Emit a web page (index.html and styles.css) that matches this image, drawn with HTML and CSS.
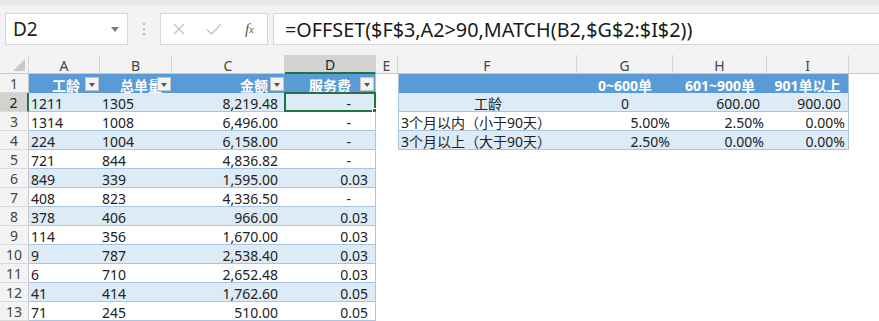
FILE: index.html
```
<!DOCTYPE html>
<html lang="zh">
<head>
<meta charset="utf-8">
<title>OFFSET</title>
<link rel="stylesheet" href="styles.css">
</head>
<body>
<div class="app">
  <div class="fbar">
    <div class="namebox">
      <span>D2</span>
      <svg class="caret" width="8" height="5" viewBox="0 0 8 5"><path d="M0 0H8L4 5Z" fill="#7a7a7a"/></svg>
    </div>
    <div class="grip">
      <svg width="4" height="14" viewBox="0 0 4 14"><circle cx="2" cy="2" r="1.2" fill="#bdbdbd"/><circle cx="2" cy="7" r="1.2" fill="#bdbdbd"/><circle cx="2" cy="12" r="1.2" fill="#bdbdbd"/></svg>
    </div>
    <div class="fbtns">
      <span class="fbtn"><svg width="12" height="12" viewBox="0 0 12 12"><path d="M1 1L11 11M11 1L1 11" stroke="#c4c4c4" stroke-width="1.4"/></svg></span>
      <span class="fbtn"><svg width="16" height="12" viewBox="0 0 16 12"><path d="M1 6.5L5.5 11L15 1" stroke="#c4c4c4" stroke-width="1.4" fill="none"/></svg></span>
      <span class="fbtn fx"><i>f</i><sub>x</sub></span>
    </div>
    <div class="finput">=OFFSET($F$3,A2&gt;90,MATCH(B2,$G$2:$I$2))</div>
  </div>

  <div class="sheet">
    <!-- column headers -->
    <div class="corner"><svg width="12" height="12" viewBox="0 0 12 12"><path d="M12 0V12H0Z" fill="#c9c9c9"/></svg></div>
    <div class="ch">A</div>
    <div class="ch">B</div>
    <div class="ch">C</div>
    <div class="ch sel">D</div>
    <div class="ch">E</div>
    <div class="ch">F</div>
    <div class="ch">G</div>
    <div class="ch">H</div>
    <div class="ch">I</div>
    <div class="ch last"></div>

    <!-- row 1 -->
    <div class="rh">1</div>
    <div class="c th pa">工龄<span class="flt"></span></div>
    <div class="c th pb">总单量<span class="flt"></span></div>
    <div class="c th pc">金额<span class="flt"></span></div>
    <div class="c th pd dr">服务费<span class="flt"></span></div>
    <div class="c e"></div>
    <div class="c th2 fl"></div>
    <div class="c th2 ctr">0~600单</div>
    <div class="c th2 ctr">601~900单</div>
    <div class="c th2 ctr ir">901单以上</div>
    <div class="c e"></div>

    <!-- row 2 -->
    <div class="rh sel">2</div>
    <div class="c b1 l">1211</div>
    <div class="c b1 l">1305</div>
    <div class="c b1 r">8,219.48</div>
    <div class="c b1 r dash dr active">-<span class="selbox"><span class="handle"></span></span></div>
    <div class="c e"></div>
    <div class="c b1 ctr fl">工龄</div>
    <div class="c b1 ctr">0</div>
    <div class="c b1 r">600.00</div>
    <div class="c b1 r ir">900.00</div>
    <div class="c e"></div>

    <!-- row 3 -->
    <div class="rh">3</div>
    <div class="c b0 l">1314</div>
    <div class="c b0 l">1008</div>
    <div class="c b0 r">6,496.00</div>
    <div class="c b0 r dash dr">-</div>
    <div class="c e"></div>
    <div class="c b0 l fl">3个月以内（小于90天）</div>
    <div class="c b0 r pct">5.00%</div>
    <div class="c b0 r pct">2.50%</div>
    <div class="c b0 r pct ir">0.00%</div>
    <div class="c e"></div>

    <!-- row 4 -->
    <div class="rh">4</div>
    <div class="c b1 l">224</div>
    <div class="c b1 l">1004</div>
    <div class="c b1 r">6,158.00</div>
    <div class="c b1 r dash dr">-</div>
    <div class="c e"></div>
    <div class="c b1 l fl">3个月以上（大于90天）</div>
    <div class="c b1 r pct">2.50%</div>
    <div class="c b1 r pct">0.00%</div>
    <div class="c b1 r pct ir">0.00%</div>
    <div class="c e"></div>

    <!-- row 5 -->
    <div class="rh">5</div>
    <div class="c b0 l">721</div>
    <div class="c b0 l">844</div>
    <div class="c b0 r">4,836.82</div>
    <div class="c b0 r dash dr">-</div>
    <div class="blank"></div>

    <!-- row 6 -->
    <div class="rh">6</div>
    <div class="c b1 l">849</div>
    <div class="c b1 l">339</div>
    <div class="c b1 r">1,595.00</div>
    <div class="c b1 r dr">0.03</div>
    <div class="blank"></div>

    <!-- row 7 -->
    <div class="rh">7</div>
    <div class="c b0 l">408</div>
    <div class="c b0 l">823</div>
    <div class="c b0 r">4,336.50</div>
    <div class="c b0 r dash dr">-</div>
    <div class="blank"></div>

    <!-- row 8 -->
    <div class="rh">8</div>
    <div class="c b1 l">378</div>
    <div class="c b1 l">406</div>
    <div class="c b1 r">966.00</div>
    <div class="c b1 r dr">0.03</div>
    <div class="blank"></div>

    <!-- row 9 -->
    <div class="rh">9</div>
    <div class="c b0 l">114</div>
    <div class="c b0 l">356</div>
    <div class="c b0 r">1,670.00</div>
    <div class="c b0 r dr">0.03</div>
    <div class="blank"></div>

    <!-- row 10 -->
    <div class="rh">10</div>
    <div class="c b1 l">9</div>
    <div class="c b1 l">787</div>
    <div class="c b1 r">2,538.40</div>
    <div class="c b1 r dr">0.03</div>
    <div class="blank"></div>

    <!-- row 11 -->
    <div class="rh">11</div>
    <div class="c b0 l">6</div>
    <div class="c b0 l">710</div>
    <div class="c b0 r">2,652.48</div>
    <div class="c b0 r dr">0.03</div>
    <div class="blank"></div>

    <!-- row 12 -->
    <div class="rh">12</div>
    <div class="c b1 l">41</div>
    <div class="c b1 l">414</div>
    <div class="c b1 r">1,762.60</div>
    <div class="c b1 r dr">0.05</div>
    <div class="blank"></div>

    <!-- row 13 -->
    <div class="rh">13</div>
    <div class="c b0 l">71</div>
    <div class="c b0 l">245</div>
    <div class="c b0 r">510.00</div>
    <div class="c b0 r dr">0.05</div>
    <div class="blank"></div>
  </div>
</div>
</body>
</html>
```
FILE: styles.css
```
* {
  box-sizing: border-box;
  margin: 0;
  padding: 0;
}

body {
  margin: 0;
  width: 879px;
  height: 321px;
  overflow: hidden;
  background: #ffffff;
  font-family: "Noto Sans", "Noto Sans CJK SC", sans-serif;
  font-size: 14px;
  color: #222;
}

/* ---------- formula bar ---------- */
.fbar {
  height: 55px;
  background: #f3f3f3;
  border-top: 5px solid #e8e8e8;
  padding-top: 8px;
  display: flex;
  align-items: flex-start;
}

.namebox {
  width: 123px;
  height: 32px;
  margin-left: 5px;
  background: #ffffff;
  border: 1px solid #d6d6d6;
  display: flex;
  align-items: center;
  justify-content: space-between;
  padding: 0 8px 0 7px;
  font-size: 19px;
  color: #222;
}

.grip {
  width: 32px;
  height: 32px;
  display: flex;
  align-items: center;
  justify-content: center;
}

.fbtns {
  width: 108px;
  height: 32px;
  background: #ffffff;
  border: 1px solid #d6d6d6;
  display: flex;
  align-items: center;
}

.fbtn {
  width: 36px;
  display: flex;
  justify-content: center;
  align-items: center;
}

.fx {
  font-family: "Liberation Serif", serif;
  font-size: 15px;
  color: #555;
  font-style: italic;
}

.fx i {
  font-style: italic;
}

.fx sub {
  font-size: 10px;
  vertical-align: -1px;
}

.finput {
  flex: 1;
  height: 32px;
  margin-left: 5px;
  margin-right: -3px;
  background: #ffffff;
  border: 1px solid #d6d6d6;
  display: flex;
  align-items: center;
  padding-left: 11px;
  font-size: 19.8px;
  color: #1a1a1a;
  white-space: nowrap;
}

/* ---------- sheet grid ---------- */
.sheet {
  display: grid;
  grid-template-columns: 29px 71px 72px 113px 91px 22px 179px 96px 94px 82px 30px;
  grid-auto-rows: 19px;
}

.corner {
  background: #f3f3f3;
  border-right: 1px solid #d4d4d4;
  border-bottom: 1px solid #c8c8c8;
  display: flex;
  align-items: flex-end;
  justify-content: flex-end;
  padding: 0 3px 2px 0;
}

.ch {
  background: #f3f3f3;
  border-right: 1px solid #d4d4d4;
  border-bottom: 1px solid #c8c8c8;
  color: #444;
  font-size: 14px;
  display: flex;
  align-items: center;
  justify-content: center;
  padding-top: 2px;
}

.ch.sel {
  background: #d2d2d2;
  border-bottom: 2px solid #217346;
  color: #222;
}

.ch.last {
  border-right: none;
}

.rh {
  background: #f3f3f3;
  border-right: 1px solid #c8c8c8;
  border-bottom: 1px solid #dadada;
  color: #444;
  font-size: 14px;
  display: flex;
  align-items: center;
  justify-content: center;
  padding-top: 1px;
}

.rh.sel {
  background: #d2d2d2;
  border-right: 2px solid #217346;
  color: #222;
}

.c {
  position: relative;
  display: flex;
  align-items: center;
  white-space: nowrap;
  overflow: visible;
  padding-top: 2px;
}

.blank {
  grid-column: span 6;
}

.e {
  background: #ffffff;
}

.b1 {
  background: #ddebf7;
  border-bottom: 1px solid #a9c5e6;
}

.b0 {
  background: #ffffff;
  border-bottom: 1px solid #a9c5e6;
}

.th,
.th2 {
  background: #5b9bd5;
  color: #ffffff;
  font-weight: 700;
}

.th {
  justify-content: flex-end;
}

.pa { padding-right: 20px; }
.pb { padding-right: 10px; }
.pc { padding-right: 17px; }
.pd { padding-right: 24px; }

.flt {
  position: absolute;
  right: 1px;
  top: 3px;
  width: 14px;
  height: 14px;
  background: #f4f4f4;
  border: 1px solid #c2c2c2;
}

.flt::after {
  content: "";
  position: absolute;
  left: 3px;
  top: 5px;
  border-left: 3.5px solid transparent;
  border-right: 3.5px solid transparent;
  border-top: 4px solid #555;
}

.l {
  padding-left: 2px;
}

.r {
  justify-content: flex-end;
  padding-right: 7px;
}

.pct {
  padding-right: 3px;
}

.dash {
  padding-right: 24px;
}

.ctr {
  justify-content: center;
}

.dr {
  border-right: 1px solid #a9c5e6;
}

.fl {
  border-left: 1px solid #a9c5e6;
}

.ir {
  border-right: 1px solid #a9c5e6;
}

.selbox {
  position: absolute;
  left: -1px;
  top: -1px;
  right: -1px;
  bottom: -1px;
  border: 2px solid #217346;
}

.handle {
  position: absolute;
  right: -5px;
  bottom: -5px;
  width: 7px;
  height: 7px;
  background: #217346;
  border: 1px solid #ffffff;
}
```
